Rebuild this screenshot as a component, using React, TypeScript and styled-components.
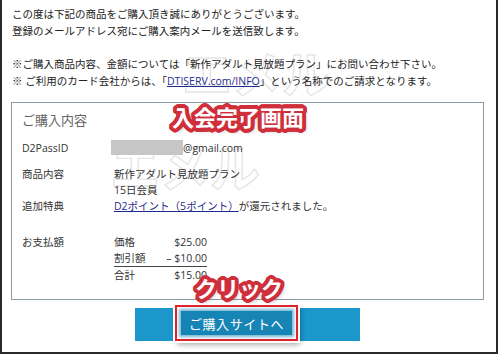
import React from 'react';
import styled, { createGlobalStyle } from 'styled-components';

const GlobalStyle = createGlobalStyle`
  html, body {
    margin: 0;
    padding: 0;
    background: #fff;
  }
`;

// thick rounded outline made of many stacked shadows
const ring = (r: number, steps: number, color: string) =>
  Array.from({ length: steps }, (_, i) => {
    const a = (i / steps) * Math.PI * 2;
    return `${(Math.cos(a) * r).toFixed(2)}px ${(Math.sin(a) * r).toFixed(2)}px 0 ${color}`;
  }).join(', ');

const labelShadow = `${ring(2, 12, '#cf2f3b')}, ${ring(3.8, 28, '#cf2f3b')}, 3px 3px 4px rgba(0, 0, 0, 0.35)`;

const Frame = styled.div`
  position: relative;
  z-index: 0;
  width: 498px;
  height: 354px;
  box-sizing: border-box;
  border-left: 2px solid #2a2a2a;
  border-right: 2px solid #2a2a2a;
  border-bottom: 2px solid #2a2a2a;
  padding: 6px 12px 0 9px;
  font-family: 'Open Sans', 'Noto Sans CJK JP', sans-serif;
  font-size: 10.5px;
  color: #222;
  overflow: hidden;
`;

const Watermark = styled.div<{ $left: number; $top: number }>`
  position: absolute;
  z-index: -1;
  left: ${(p) => p.$left}px;
  top: ${(p) => p.$top}px;
  font-family: 'Noto Sans CJK JP', sans-serif;
  font-weight: 700;
  font-size: 50px;
  line-height: 1;
  color: transparent;
  -webkit-text-stroke: 1.4px #e6e6e6;
  white-space: nowrap;
`;

const Intro = styled.p<{ $mt?: number }>`
  margin: ${(p) => p.$mt || 0}px 0 0 1px;
  line-height: 17px;
`;

const Link = styled.a`
  color: #1f2b8c;
  text-decoration: underline;
`;

const Box = styled.section`
  margin-top: 12px;
  border: 1px solid #8d9ca4;
  padding: 8px 10px 16px 10px;
`;

const Heading = styled.h2`
  margin: 0;
  font-size: 13px;
  font-weight: 400;
  line-height: 18px;
  color: #666;
`;

const Row = styled.div<{ $mt: number }>`
  display: grid;
  grid-template-columns: 92px 1fr;
  margin-top: ${(p) => p.$mt}px;
  line-height: 16px;
  color: #333;
`;

const Redacted = styled.span`
  display: inline-block;
  width: 72px;
  height: 15px;
  margin-left: -3px;
  vertical-align: -3px;
  background: #c6c6c6;
`;

const PriceTable = styled.div`
  display: grid;
  grid-template-columns: 1fr auto;
  width: 93px;
`;

const PriceCell = styled.span<{ $right?: boolean; $rule?: boolean }>`
  text-align: ${(p) => (p.$right ? 'right' : 'left')};
  border-bottom: ${(p) => (p.$rule ? '1px solid #444' : 'none')};
`;

const ButtonRow = styled.div`
  display: flex;
  justify-content: center;
  margin-top: 8px;
`;

const SiteButton = styled.button`
  width: 225px;
  height: 33px;
  border: none;
  background: #1b97cb;
  color: #fff;
  font-family: 'Noto Sans CJK JP', sans-serif;
  font-size: 12px;
`;

const Callout = styled.div`
  position: absolute;
  left: 173px;
  top: 305px;
  width: 123px;
  height: 36px;
  box-sizing: border-box;
  display: flex;
  padding: 4px;
  border: 2px solid #e2232a;
  background: #fff;
  box-shadow: 0 0 0 2px #fff, 2px 3px 6px rgba(0, 0, 0, 0.4);
`;

const Zoomed = styled.div`
  flex: 1;
  display: flex;
  align-items: center;
  justify-content: center;
  background: #1784b6;
  box-shadow: 0 0 3px 2px rgba(23, 132, 182, 0.6);
  color: #fff;
  font-family: 'Noto Sans CJK JP', sans-serif;
  font-size: 13px;
  letter-spacing: 0.6px;
`;

const Tag = styled.div<{ $left: number; $top: number; $size: number }>`
  position: absolute;
  left: ${(p) => p.$left}px;
  top: ${(p) => p.$top}px;
  font-family: 'Noto Sans CJK JP', sans-serif;
  font-weight: 700;
  font-size: ${(p) => p.$size}px;
  line-height: 1;
  color: #fff;
  white-space: nowrap;
  text-shadow: ${labelShadow};
`;

export default function App() {
  return (
    <>
      <GlobalStyle />
      <Frame>
        <Watermark $left={180} $top={46}>エメル</Watermark>
        <Watermark $left={108} $top={140}>エメル</Watermark>

        <Intro>
          この度は下記の商品をご購入頂き誠にありがとうございます。
          <br />
          登録のメールアドレス宛にご購入案内メールを送信致します。
        </Intro>
        <Intro $mt={16}>
          ※ご購入商品内容、金額については「新作アダルト見放題プラン」にお問い合わせ下さい。
          <br />
          ※ ご利用のカード会社からは、「<Link>DTISERV.com/INFO</Link>」という名称でのご請求となります。
        </Intro>

        <Box>
          <Heading>ご購入内容</Heading>
          <Row $mt={11}>
            <span>D2PassID</span>
            <span>
              <Redacted />@gmail.com
            </span>
          </Row>
          <Row $mt={10}>
            <span>商品内容</span>
            <span>
              新作アダルト見放題プラン
              <br />
              15日会員
            </span>
          </Row>
          <Row $mt={0}>
            <span>追加特典</span>
            <span>
              <Link>D2ポイント（5ポイント）</Link>が還元されました。
            </span>
          </Row>
          <Row $mt={20}>
            <span>お支払額</span>
            <PriceTable>
              <PriceCell>価格</PriceCell>
              <PriceCell $right>$25.00</PriceCell>
              <PriceCell $rule>割引額</PriceCell>
              <PriceCell $right $rule>– $10.00</PriceCell>
              <PriceCell>合計</PriceCell>
              <PriceCell $right>$15.00</PriceCell>
            </PriceTable>
          </Row>
        </Box>

        <ButtonRow>
          <SiteButton>ご購入サイトへ</SiteButton>
        </ButtonRow>

        <Callout>
          <Zoomed>ご購入サイトへ</Zoomed>
        </Callout>

        <Tag $left={170} $top={105} $size={22}>入会完了画面</Tag>
        <Tag $left={193} $top={276} $size={22}>クリック</Tag>
      </Frame>
    </>
  );
}
